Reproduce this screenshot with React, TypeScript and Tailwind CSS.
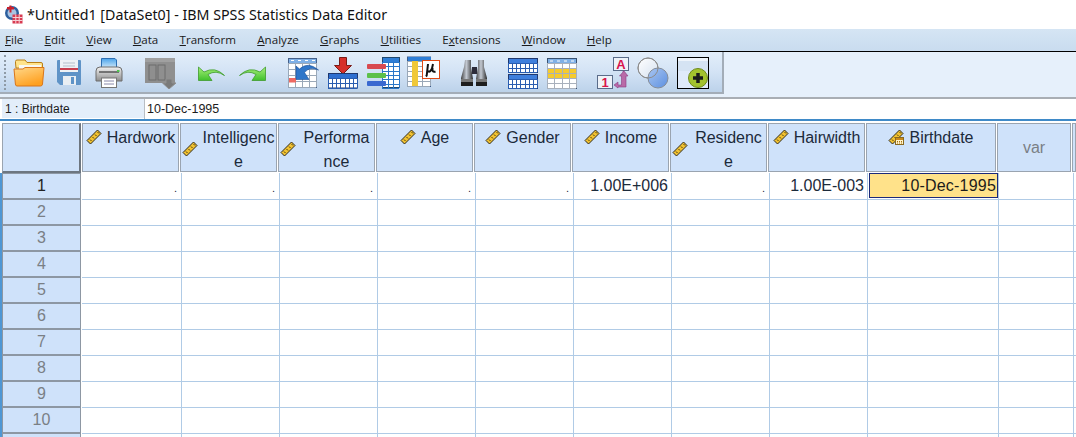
import React from "react";

const Ruler = ({ date }: { date?: boolean }) => (
  <svg width="16" height="16" viewBox="0 0 16 16" className="shrink-0">
    <path d="M1 11.5 11.5 1 15 4.5 4.5 15Z" fill="#f2c230" stroke="#2e2a1c" strokeWidth="1" />
    <path d="M4 10.5 5.5 12M6.500 8 8 9.500M9 5.500 10.500 7M11.500 3 13 4.500" stroke="#4a3c10" strokeWidth="1" />
    {date && (
      <g>
        <rect x="7.5" y="8.5" width="8" height="7" fill="#fff3c8" stroke="#8a6a20" />
        <rect x="8" y="9" width="7" height="2" fill="#c98a1c" />
        <path d="M9 12.5h1M11 12.5h1M13 12.5h1M9 14h1M11 14h1M13 14h1" stroke="#a86f10" />
      </g>
    )}
  </svg>
);

const Folder = () => (
  <svg width="32" height="28" viewBox="0 0 32 28">
    <defs>
      <linearGradient id="fo" x1="0" y1="0" x2="0.5" y2="1">
        <stop offset="0" stopColor="#ffd88a" />
        <stop offset="1" stopColor="#ffa020" />
      </linearGradient>
    </defs>
    <path d="M2.5 4V2.5Q2.5 1 4 1H12L14 3.5H28Q29.5 3.5 29.5 5V9H3Z" fill="#ffe38a" stroke="#b9801a" />
    <rect x="6" y="6" width="22" height="5" fill="#f7f7f2" />
    <path d="M1 10H10L12 8.500H31L29.500 25Q29.400 27 27.500 27H4Q2.500 27 2.400 25Z" fill="url(#fo)" stroke="#d9761a" />
  </svg>
);

const Save = () => (
  <svg width="26" height="27" viewBox="0 0 26 27">
    <path d="M1 2Q1 1 2 1H24Q25 1 25 2V25Q25 26 24 26H4L1 23Z" fill="#5f93c7" />
    <rect x="4" y="1" width="18" height="12" fill="#eef2f5" />
    <rect x="4" y="9" width="18" height="2" fill="#c8414f" />
    <path d="M7 4H19M7 7H19" stroke="#b5bfca" />
    <rect x="7" y="17" width="13" height="9" fill="#e9eef3" />
    <rect x="15" y="18" width="3" height="7" fill="#5f93c7" />
  </svg>
);

const Printer = () => (
  <svg width="28" height="31" viewBox="0 0 28 31">
    <defs>
      <linearGradient id="pb" x1="0" y1="0" x2="0" y2="1">
        <stop offset="0" stopColor="#f2f2f2" />
        <stop offset="1" stopColor="#8d8d8d" />
      </linearGradient>
      <linearGradient id="pp" x1="0" y1="0" x2="0" y2="1">
        <stop offset="0" stopColor="#4aa3ea" />
        <stop offset="1" stopColor="#dff0fb" />
      </linearGradient>
    </defs>
    <path d="M6.500 12V1.500H20L21.500 3V12Z" fill="url(#pp)" stroke="#2d6fb3" />
    <path d="M1 14Q1 10 5 10H23Q27 10 27 14V24H1Z" fill="url(#pb)" stroke="#6d6d6d" />
    <path d="M4 15H24" stroke="#555" strokeWidth="1.500" />
    <rect x="22" y="13" width="2.500" height="2" fill="#4fc24f" />
    <rect x="6.500" y="21" width="15" height="9.500" fill="#fff" stroke="#777" />
    <path d="M9 24H19M9 27H19" stroke="#88a" />
  </svg>
);

const GreyBox = () => (
  <svg width="31" height="31" viewBox="0 0 31 31">
    <rect x="0" y="0" width="30" height="25" fill="#8f8f8f" />
    <rect x="0" y="0" width="30" height="4" fill="#a0a0a0" />
    <rect x="4" y="7" width="7" height="15" fill="#8f8f8f" stroke="#6c6c6c" />
    <rect x="13" y="7" width="7" height="15" fill="#8f8f8f" stroke="#6c6c6c" />
    <path d="M21 21H27V25H31L24 31 17.500 25H21Z" fill="#7a7a7a" stroke="#8e8e8e" />
  </svg>
);

const Undo = ({ flip }: { flip?: boolean }) => (
  <svg width="28" height="16" viewBox="0 0 28 16" style={flip ? { transform: "scaleX(-1)" } : undefined}>
    <defs>
      <linearGradient id={flip ? "ug2" : "ug1"} x1="0" y1="0" x2="0" y2="1">
        <stop offset="0" stopColor="#a8f07a" />
        <stop offset="1" stopColor="#3fc02c" />
      </linearGradient>
    </defs>
    <path
      d="M0.500 1 6 6Q17 0 26.500 9.500 18 3.500 10 8.500L14 14.500H0.500Z"
      fill={`url(#${flip ? "ug2" : "ug1"})`}
      stroke="#3f9a2c"
      strokeWidth="0.800"
    />
  </svg>
);

const Cells = ({ x, y, w, h, cols, rows, c = "#2160ad" }: { x: number; y: number; w: number; h: number; cols: number; rows: number; c?: string }) => {
  const parts = [];
  for (let i = 0; i <= cols; i++) {
    const p = x + Math.round((w * i) / cols);
    parts.push(<line key={"c" + i} x1={p + 0.5} x2={p + 0.5} y1={y} y2={y + h} stroke={c} />);
  }
  for (let i = 0; i <= rows; i++) {
    const p = y + Math.round((h * i) / rows);
    parts.push(<line key={"r" + i} y1={p + 0.5} y2={p + 0.5} x1={x} x2={x + w} stroke={c} />);
  }
  return <>{parts}</>;
};

const GoTo = () => (
  <svg width="31" height="30" viewBox="0 0 31 30">
    <rect x="0.500" y="0.500" width="28" height="29" fill="#fff" stroke="#45608a" />
    <rect x="1" y="1" width="27" height="5" fill="#7fb0e6" />
    <Cells x={0} y={5} w={28} h={24} cols={4} rows={4} c="#9aa8b8" />
    <path d="M3 2.500H6M10 2.500H13M17 2.500H20M24 2.500H27" stroke="#fff" />
    <rect x="1" y="20" width="7" height="4.500" fill="#ef6a62" />
    <path d="M8 8 11.500 11Q20 3 30.500 12 22 8 16.500 14.500L21 21.500H8Z" fill="#2f76c9" stroke="#1c4f95" strokeWidth="0.600" />
  </svg>
);

const GoVar = () => (
  <svg width="30" height="32" viewBox="0 0 30 32">
    <path d="M11.500 0.500H18.500V8.500H23.500L15 17 6.500 8.500H11.500Z" fill="#d6302a" stroke="#7a1a16" />
    <rect x="0.500" y="16.500" width="29" height="14.500" fill="#fff" stroke="#20386e" />
    <rect x="1" y="17" width="28" height="4" fill="#2f6fd0" />
    <Cells x={0} y={21} w={29} h={10} cols={7} rows={2} c="#2a5db0" />
  </svg>
);

const VarList = () => (
  <svg width="33" height="32" viewBox="0 0 33 32">
    <rect x="15.500" y="0.500" width="17" height="30" fill="#fff" stroke="#20486e" />
    <rect x="16" y="1" width="16" height="4" fill="#2f7ed6" />
    <Cells x={15} y={5} w={17} h={26} cols={3} rows={6} c="#2a76c8" />
    <rect x="0" y="7" width="19" height="5" rx="1" fill="#d84a50" />
    <rect x="0" y="16" width="19" height="5" rx="1" fill="#5cc04a" />
    <rect x="0" y="24" width="19" height="5" rx="1" fill="#3a68d0" />
  </svg>
);

const Mu = () => (
  <svg width="33" height="31" viewBox="0 0 33 31">
    <rect x="0.500" y="1" width="23" height="29.500" fill="#fff" stroke="#3a5a8c" />
    <rect x="1" y="1" width="23" height="4" fill="#2f7ed6" />
    <Cells x={0} y={5} w={23} h={25} cols={3} rows={5} c="#9aa8b8" />
    <rect x="5" y="5" width="6" height="25" fill="#f0c838" />
    <rect x="15.500" y="4.500" width="17" height="18" fill="#fff" stroke="#e04a14" strokeWidth="1" />
    <path d="M21 8 20 17Q20 19.500 19 20.500M21 15Q23 17 25 12.500L26 8M25.500 12Q25 17 28.500 15.500" fill="none" stroke="#111" strokeWidth="2" />
  </svg>
);

const Binoculars = () => (
  <svg width="27" height="28" viewBox="0 0 27 28">
    <defs>
      <linearGradient id="bn" x1="0" y1="0" x2="1" y2="0">
        <stop offset="0" stopColor="#444" />
        <stop offset="0.450" stopColor="#c3c9d2" />
        <stop offset="1" stopColor="#2c2c2c" />
      </linearGradient>
    </defs>
    <path d="M4 1H10V8L12 20V27H0V19L3 8Z" fill="url(#bn)" />
    <path d="M17 1H23V8L26 19V27H15V20L17 8Z" fill="url(#bn)" />
    <rect x="11" y="8" width="5" height="7" fill="#2c2c3a" />
    <rect x="0" y="20" width="12" height="3" fill="#777" />
    <rect x="15" y="20" width="11" height="3" fill="#777" />
    <rect x="0" y="23" width="12" height="4" fill="#1d1d1d" />
    <rect x="15" y="23" width="11" height="4" fill="#1d1d1d" />
  </svg>
);

const Split = () => (
  <svg width="30" height="31" viewBox="0 0 30 31">
    {[0, 16].map((t) => (
      <g key={t}>
        <rect x="0.500" y={t + 0.5} width="29" height="14" fill="#fff" stroke="#20386e" />
        <rect x="1" y={t + 1} width="28" height="4" fill="#3f7fdc" />
        <Cells x={0} y={t + 5} w={29} h={9} cols={7} rows={2} c="#2a5db0" />
      </g>
    ))}
  </svg>
);

const Select = () => (
  <svg width="30" height="31" viewBox="0 0 30 31">
    <rect x="0.500" y="0.500" width="29" height="30" fill="#fff" stroke="#3a5272" />
    <rect x="1" y="1" width="28" height="5" fill="#7fb0e6" />
    <rect x="1" y="10" width="28" height="10" fill="#f5cb2e" />
    <Cells x={0} y={5} w={29} h={25} cols={4} rows={5} c="#a8b0bc" />
    <path d="M3 3H6M10 3H13M17 3H20M24 3H27" stroke="#fff" />
  </svg>
);

const Labels = () => (
  <svg width="32" height="32" viewBox="0 0 32 32" className="overflow-visible">
    <rect x="16.500" y="0.500" width="15" height="13" fill="#eef2f8" stroke="#5a6c8a" />
    <text x="24" y="12" textAnchor="middle" fontSize="13" fontWeight="700" fill="#d8144c" fontFamily="Liberation Sans, sans-serif">A</text>
    <rect x="0.500" y="18.500" width="15" height="13" fill="#eef2f8" stroke="#5a6c8a" />
    <text x="8" y="30" textAnchor="middle" fontSize="13" fontWeight="700" fill="#d8144c" fontFamily="Liberation Sans, sans-serif">1</text>
    <path d="M26 14V15L22.500 19H24.500V28H21V25L17 28 21 31V30H29V19H31L27 14Z" fill="#b96aa8" stroke="#8a3a80" strokeWidth="0.600" />
  </svg>
);

const Venn = () => (
  <svg width="32" height="32" viewBox="0 0 32 32">
    <defs>
      <linearGradient id="vb" x1="0" y1="0" x2="1" y2="1">
        <stop offset="0" stopColor="#a9c6f2" />
        <stop offset="1" stopColor="#5c8fe0" />
      </linearGradient>
      <linearGradient id="vw" x1="0" y1="0" x2="1" y2="1">
        <stop offset="0" stopColor="#ffffff" />
        <stop offset="1" stopColor="#d5e1f0" />
      </linearGradient>
    </defs>
    <circle cx="11" cy="11" r="10" fill="url(#vw)" stroke="#8d8d8d" />
    <circle cx="21" cy="21" r="10" fill="url(#vb)" stroke="#858d98" />
    <circle cx="11" cy="11" r="10" fill="none" stroke="#8d8d8d" />
  </svg>
);

const PlusBox = () => (
  <svg width="32" height="32" viewBox="0 0 32 32">
    <rect x="0.500" y="0.500" width="31" height="31" fill="#d5e3f3" stroke="#000" />
    <rect x="1" y="1" width="30" height="3" fill="#eef4fb" />
    <rect x="1" y="14" width="30" height="17" fill="#dfeafa" />
    <circle cx="21" cy="21" r="9.500" fill="#a3c22e" stroke="#6f8a1c" />
    <path d="M21 16V26M16 21H26" stroke="#1c1c1c" strokeWidth="3.500" />
  </svg>
);

const tools: { el: React.ReactNode; cls: string }[] = [
  { el: <Folder />, cls: "ml-[13px] mt-[7px]" },
  { el: <Save />, cls: "ml-[11px] mt-[7px]" },
  { el: <Printer />, cls: "ml-[13px] mt-[5px]" },
  { el: <GreyBox />, cls: "ml-[22px] mt-[6px]" },
  { el: <Undo />, cls: "ml-[22px] mt-[14px]" },
  { el: <Undo flip />, cls: "ml-[12px] mt-[14px]" },
  { el: <GoTo />, cls: "ml-[22px] mt-[6px]" },
  { el: <GoVar />, cls: "ml-[9px] mt-[5px]" },
  { el: <VarList />, cls: "ml-[9px] mt-[5px]" },
  { el: <Mu />, cls: "ml-[7px] mt-[4px]" },
  { el: <Binoculars />, cls: "ml-[21px] mt-[7px]" },
  { el: <Split />, cls: "ml-[20px] mt-[6px]" },
  { el: <Select />, cls: "ml-[9px] mt-[6px]" },
  { el: <Labels />, cls: "ml-[20px] mt-[5px]" },
  { el: <Venn />, cls: "ml-[8px] mt-[5px]" },
  { el: <PlusBox />, cls: "ml-[8px] mt-[5px]" },
];

const menus: [string, string, string][] = [
  ["", "F", "ile"],
  ["", "E", "dit"],
  ["", "V", "iew"],
  ["", "D", "ata"],
  ["", "T", "ransform"],
  ["", "A", "nalyze"],
  ["", "G", "raphs"],
  ["", "U", "tilities"],
  ["E", "x", "tensions"],
  ["", "W", "indow"],
  ["", "H", "elp"],
];

const headers: { name: string; wrap?: boolean; date?: boolean }[] = [
  { name: "Hardwork" },
  { name: "Intelligence", wrap: true },
  { name: "Performance", wrap: true },
  { name: "Age" },
  { name: "Gender" },
  { name: "Income" },
  { name: "Residence", wrap: true },
  { name: "Hairwidth" },
  { name: "Birthdate", date: true },
];

const firstRow = [".", ".", ".", ".", ".", "1.00E+006", ".", "1.00E-003", "10-Dec-1995", "", ""];

const headGrid = "grid grid-cols-[82px_repeat(8,98px)_131px_75px_1fr] grid-rows-[50px] h-[50px]";
const rowGrid = "grid grid-cols-[82px_100px_repeat(7,98px)_131px_75px_1fr] h-[26px]";

const rows = Array.from({ length: 11 }, (_, i) => i + 1);

export default function App() {
  return (
    <div className="w-[1076px] h-[437px] overflow-hidden bg-white flex flex-col [font-family:'Liberation_Sans',Arial,sans-serif] text-[#1c1c1c]">
      <div className="h-[29px] shrink-0 flex items-center pl-[4px] gap-[4px] [font-family:'Noto_Sans',sans-serif] text-[14.250px] text-[#111]">
        <svg width="19" height="19" viewBox="0 0 19 19">
          <circle cx="8" cy="8" r="7" fill="#2d5f9e" />
          <circle cx="8" cy="8" r="4.500" fill="#a9c4e2" />
          <rect x="3" y="2" width="7" height="2.500" fill="#c8202c" />
          <rect x="5.500" y="0.500" width="2" height="7" fill="#c8202c" />
          <rect x="8.500" y="9.500" width="10" height="9" fill="#d83a50" />
          <path d="M8.500 12.500H18.500M8.500 15.500H18.500M11.800 9.500V18.500M15.200 9.500V18.500" stroke="#f6d0d6" />
        </svg>
        <span>*Untitled1 [DataSet0] - IBM SPSS Statistics Data Editor</span>
      </div>

      <div className="h-[23px] shrink-0 bg-gradient-to-b from-[#d5e5f4] to-[#c9dcef] border-b border-black flex items-center pl-[5px] gap-[21.200px] [font-family:'Open_Sans',sans-serif] text-[11.600px] text-[#1a1a1a]">
        {menus.map(([pre, key, rest]) => (
          <span key={key + rest}>
            {pre}
            <span className="underline">{key}</span>
            {rest}
          </span>
        ))}
      </div>

      <div className="h-[45px] shrink-0 bg-[#e6f0fb] flex items-start">
        <div className="w-[724px] h-[42px] relative flex items-start bg-gradient-to-b from-[#e3eefa] via-[#d3e3f5] to-[#bcd2ea] border-r-2 border-b-2 border-[#a3adb8]">
          <div className="absolute left-[4px] top-[3px] bottom-[2px] w-[3px] border-l-2 border-dotted border-[#8e9aa6]" />
          {tools.map((t, i) => (
            <div key={i} className={"shrink-0 " + t.cls}>
              {t.el}
            </div>
          ))}
        </div>
      </div>

      <div className="h-[24px] shrink-0 border-t-2 border-[#a9aeb4] flex items-stretch border-b-2 border-b-[#3f8ac8] bg-white">
        <div className="w-[142px] ml-[2px] mb-[1px] bg-[#e3eefa] flex items-center pl-[3px] text-[12px]">1 : Birthdate</div>
        <div className="flex-1 flex items-center pl-[2px] border-l border-[#b9bec4] text-[12.500px]">10-Dec-1995</div>
      </div>

      <div className="flex-1 pt-[2px]">
        <div className={headGrid}>
          <div className="ml-[2px] mr-[1px] bg-[#cfe2fa] border border-[#9aa4b0] border-r-[2px] border-b-[2px] border-r-[#6d7680] border-b-[#6d7680]" />
          {headers.map((h) => (
            <div
              key={h.name}
              className={
                "mr-[1px] mb-[1px] bg-[#cfe2fa] border border-[#9aa4b0] flex justify-center text-[16px] leading-[24px] text-[#1c2a3a] pt-[2px] " +
                (h.wrap ? "gap-[4px]" : "gap-[5px]")
              }
            >
              <div className={h.wrap ? "mt-[15px]" : "mt-[3px]"}>
                <Ruler date={h.date} />
              </div>
              <div className={h.wrap ? "w-[73px] break-all text-center" : "whitespace-nowrap"}>{h.name}</div>
            </div>
          ))}
          <div className="mr-[1px] mb-[1px] bg-[#cfe2fa] border border-[#9aa4b0] flex items-center justify-center text-[16px] text-[#7a7f85]">var</div>
          <div className="mb-[1px] bg-[#cfe2fa] border border-[#9aa4b0]" />
        </div>

        {rows.map((r) => (
          <div key={r} className={rowGrid}>
            <div className="pr-[1px] pb-[1px] border-l-2 border-l-[#4f97d4]">
              <div
                className={
                  "h-full bg-[#cfe2fa] border border-[#8d97a3] flex items-center justify-center text-[16px] " +
                  (r === 1 ? "text-[#222]" : "text-[#7a7f85]")
                }
              >
                {r === 11 ? "" : r}
              </div>
            </div>
            {firstRow.map((v, c) => {
              const selected = r === 1 && c === 8;
              if (selected) {
                return (
                  <div key={c} className="border-r border-b border-[#b0cbe6] pl-[1px]">
                    <div className="h-[25px] bg-[#ffe28a] border border-[#1c2a7a] flex items-center justify-end pr-[1px] text-[16px] tracking-[0.2px] text-[#1c1c1c]">
                      {v}
                    </div>
                  </div>
                );
              }
              return (
                <div
                  key={c}
                  className={
                    "border-b border-[#b0cbe6] flex items-center justify-end pr-[3px] text-[#1c2a3a] " +
                    (v === "." ? "text-[11px] " : "text-[16px] ") +
                    (c === 10 ? "" : "border-r")
                  }
                >
                  {r === 1 ? <span className={v === "." ? "mt-[5px] mr-[1px]" : ""}>{v}</span> : ""}
                </div>
              );
            })}
          </div>
        ))}
      </div>
    </div>
  );
}
